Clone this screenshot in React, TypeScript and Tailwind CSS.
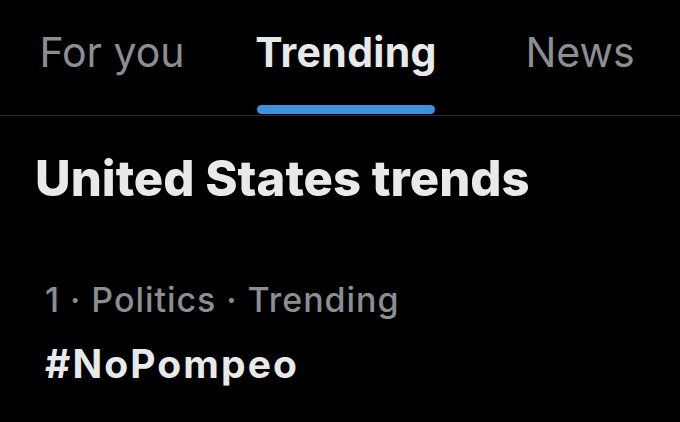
export default function App() {
  return (
    <div className="w-[680px] h-[422px] bg-black overflow-hidden text-[#e7e9ea]" style={{ fontFamily: 'Inter, "Noto Sans", sans-serif' }}>
      <div className="flex border-b border-[#2a2d31] h-[116px] -ml-[5px]">
        <div className="w-[234px] shrink-0 flex flex-col items-center pt-[24px]">
          <span className="text-[41px] leading-[56px] text-[#8b8e92]">For you</span>
        </div>
        <div className="w-[234px] shrink-0 flex flex-col items-center pt-[24px]">
          <span className="text-[41px] leading-[56px] font-bold tracking-[0.3px]">Trending</span>
          <div className="mt-[25px] w-[178px] h-[9px] rounded-full bg-[#3a93dc]" />
        </div>
        <div className="w-[234px] shrink-0 flex flex-col items-center pt-[24px]">
          <span className="text-[41px] leading-[56px] text-[#8b8e92]">News</span>
        </div>
      </div>
      <div className="px-[35px] pt-[33px]">
        <h1 className="text-[49px] leading-[60px] font-extrabold">United States trends</h1>
      </div>
      <div className="px-[45px] pt-[71px]">
        <div className="text-[34px] leading-[40px] font-medium tracking-[0.95px] text-[#8b8e92]">1 · Politics · Trending</div>
        <div className="text-[39px] leading-[48px] font-bold tracking-[2.1px] mt-[20px]">#NoPompeo</div>
      </div>
    </div>
  );
}
